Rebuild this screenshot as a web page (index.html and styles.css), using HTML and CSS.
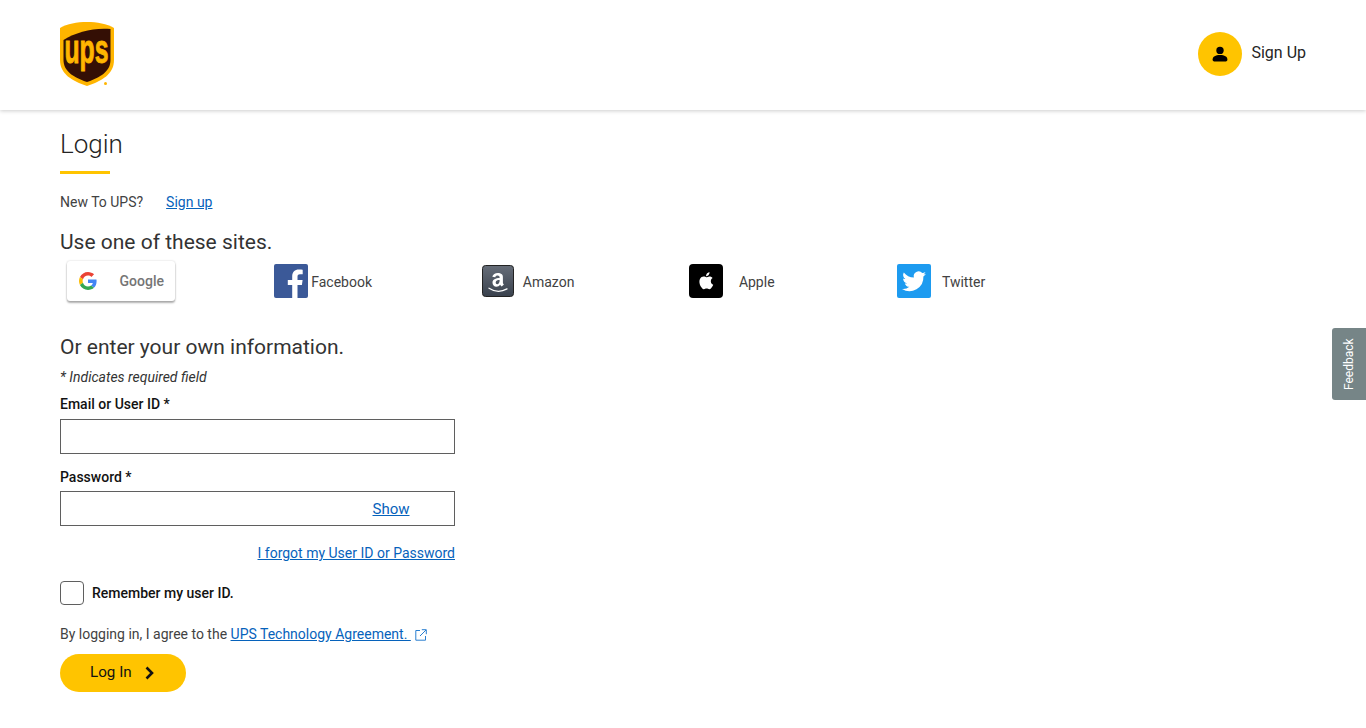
FILE: index.html
```html
<!DOCTYPE html>
<html lang="en">
<head>
<meta charset="utf-8">
<title>UPS Login</title>
<link rel="stylesheet" href="styles.css">
</head>
<body>
<header class="top">
  <svg class="logo" viewBox="0 0 54 66" width="54" height="66" aria-label="UPS">
    <path d="M27 0C17 0 7 1.700 0 6V38C0 52 12 59 27 64C42 59 54 52 54 38V6C47 1.700 37 0 27 0Z" fill="#ffb500"/>
    <path d="M50.500 7V38C50.500 49.500 40 55.500 27 60C14 55.500 3.500 49.500 3.500 38V18C16 10 34 5.500 50.500 7Z" fill="#340f05"/>
    <text class="logo-text" x="26.500" y="41" text-anchor="middle" textLength="44" lengthAdjust="spacingAndGlyphs">ups</text>
    <circle cx="45.500" cy="61.500" r="1.500" fill="#ffb500"/>
  </svg>
  <a class="signup" href="#">
    <span class="avatar">
      <svg viewBox="0 0 16 16" width="16" height="16"><circle cx="8" cy="4.400" r="3.700"/><path d="M.6 13.500C.6 10.500 3.500 8.900 8 8.900S15.400 10.500 15.400 13.500C15.400 15 14.500 15.600 13 15.600H3C1.500 15.600 .6 15 .6 13.500Z"/></svg>
    </span>
    <span class="signup-text">Sign Up</span>
  </a>
</header>

<main class="content">
  <h1 class="title">Login</h1>
  <p class="newto"><span>New To UPS?</span><a href="#">Sign up</a></p>

  <h2 class="sub sites">Use one of these sites.</h2>
  <div class="socials">
    <div class="soc">
      <button class="google" type="button">
        <svg viewBox="0 0 48 48" width="18" height="18">
          <path fill="#ea4335" d="M24 9.500c3.500 0 6.700 1.200 9.200 3.600l6.900-6.900C35.900 2.400 30.500 0 24 0 14.600 0 6.500 5.400 2.600 13.200l8 6.200C12.400 13.700 17.700 9.500 24 9.500z"/>
          <path fill="#4285f4" d="M46.900 24.500c0-1.600-.1-3.100-.4-4.500H24v9h12.900c-.6 3-2.200 5.500-4.700 7.200l7.700 6c4.500-4.200 7-10.300 7-17.700z"/>
          <path fill="#fbbc05" d="M10.500 28.600c-.5-1.400-.8-3-.8-4.600s.3-3.200.8-4.600l-8-6.200C.9 16.500 0 20.100 0 24s.9 7.500 2.600 10.800l7.900-6.200z"/>
          <path fill="#34a853" d="M24 48c6.500 0 11.900-2.100 15.900-5.800l-7.700-6c-2.200 1.400-4.900 2.300-8.200 2.300-6.300 0-11.600-4.200-13.500-9.900l-8 6.200C6.500 42.600 14.600 48 24 48z"/>
        </svg>
        <span>Google</span>
      </button>
    </div>
    <div class="soc">
      <svg class="ico" viewBox="0 0 34 34" width="34" height="34">
        <rect width="34" height="34" rx="2" fill="#3b5998"/>
        <path d="M23.500 34V21h4.400l.7-5.100h-5.100v-3.200c0-1.500.4-2.500 2.500-2.500h2.700V5.700c-.5-.1-2.100-.2-3.900-.2-3.900 0-6.600 2.400-6.600 6.800v3.600h-4.400V21h4.400v13z" fill="#fff"/>
      </svg>
      <span class="lbl gap3">Facebook</span>
    </div>
    <div class="soc">
      <svg class="ico" viewBox="0 0 32 32" width="32" height="32">
        <defs><linearGradient id="amz" x1="0" y1="0" x2="0" y2="1"><stop offset="0" stop-color="#666d78"/><stop offset="1" stop-color="#39414d"/></linearGradient></defs>
        <rect x=".5" y=".5" width="31" height="31" rx="3" fill="url(#amz)" stroke="#222"/>
        <path d="M17.600 12.500c0-1.300-.7-2.100-2-2.100-1.200 0-2.100.6-2.400 1.800l-2.900-.4c.5-2.700 2.900-3.900 5.500-3.900 1.500 0 3 .4 4 1.300 1.200 1.100 1.100 2.400 1.100 3.900v4.200c0 1.200.5 1.700 1 2.300l-2.200 1.900c-.7-.5-1.100-1.100-1.500-1.700-1 1.200-2.200 1.900-3.800 1.900-2.300 0-3.900-1.500-3.900-3.900 0-3.500 3.200-4.700 7.100-4.800v-.5zm0 2.500c-2 0-3.900.5-3.900 2.500 0 1 .6 1.700 1.500 1.700 1.500 0 2.400-1.800 2.400-3.200v-1z" fill="#fff"/>
        <path d="M7 23.200c5.500 3.600 12.500 3.800 18 .7" fill="none" stroke="#fff" stroke-width="1.300" stroke-linecap="round"/>
      </svg>
      <span class="lbl gap9">Amazon</span>
    </div>
    <div class="soc">
      <svg class="ico" viewBox="0 0 34 34" width="34" height="34">
        <rect width="34" height="34" rx="4" fill="#000"/>
        <path d="M21.800 17.200c0-2 1.700-3 1.800-3.100-1-1.400-2.500-1.600-3-1.600-1.300-.1-2.500.8-3.200.8-.7 0-1.700-.8-2.800-.7-1.400 0-2.700.8-3.500 2.100-1.400 2.500-.4 6.300 1.100 8.400.7 1.100 1.600 2.200 2.700 2.100 1.100 0 1.500-.7 2.700-.7s1.600.7 2.800.7c1.200 0 1.900-1.100 2.600-2.100.8-1.200 1.200-2.300 1.200-2.400-.1 0-2.400-.9-2.400-3.500zM19.600 11c.6-.7 1-1.700.9-2.700-.8 0-1.900.6-2.500 1.300-.5.600-1 1.600-.9 2.600 1 .1 1.900-.5 2.500-1.200z" fill="#fff"/>
      </svg>
      <span class="lbl gap16">Apple</span>
    </div>
    <div class="soc">
      <svg class="ico" viewBox="0 0 34 34" width="34" height="34">
        <rect width="34" height="34" rx="2" fill="#1d9bf0"/>
        <path d="M29 9.800c-.9.400-1.800.7-2.800.8 1-.6 1.800-1.600 2.200-2.700-.9.600-2 1-3.100 1.200a4.900 4.900 0 0 0-8.400 4.500c-4.100-.2-7.700-2.200-10.100-5.200a4.900 4.900 0 0 0 1.500 6.600c-.8 0-1.600-.2-2.200-.6v.1c0 2.400 1.700 4.400 3.900 4.800-.7.200-1.500.2-2.200.1.600 2 2.400 3.400 4.600 3.400A9.900 9.900 0 0 1 5 24.900a13.900 13.900 0 0 0 21.400-12.400c.9-.7 1.900-1.600 2.600-2.700z" fill="#fff"/>
      </svg>
      <span class="lbl gap11">Twitter</span>
    </div>
  </div>

  <h2 class="sub own">Or enter your own information.</h2>
  <p class="req">* Indicates required field</p>

  <form class="form">
    <label class="flabel" for="uid">Email or User ID *</label>
    <input class="field" id="uid" type="text">
    <label class="flabel pw" for="pwd">Password *</label>
    <div class="pwwrap">
      <input class="field" id="pwd" type="password">
      <a class="show" href="#">Show</a>
    </div>
    <a class="forgot" href="#">I forgot my User ID or Password</a>
    <label class="remember"><span class="box"></span><span>Remember my user ID.</span></label>
    <p class="agree">By logging in, I agree to the <a href="#">UPS Technology Agreement.&nbsp;</a>
      <svg class="ext" viewBox="0 0 12 12" width="12" height="12"><path d="M5 1.500H.8v9.700h9.700V7M6.800.7h4.500v4.500M11 1 5 7" fill="none" stroke="#2a7fd0" stroke-width="1"/></svg>
    </p>
    <button class="login" type="button"><span class="login-text">Log In</span>
      <svg viewBox="0 0 10 14" width="10" height="14"><path d="M1.500 1.500 7 7 1.500 12.500" fill="none" stroke="#121212" stroke-width="2.600"/></svg>
    </button>
  </form>
</main>

<a class="feedback" href="#">Feedback</a>
</body>
</html>
```
FILE: styles.css
```css
* { box-sizing: border-box; }
html, body { margin: 0; padding: 0; background: #fff; }
body {
  font-family: Roboto, "Liberation Sans", sans-serif;
  font-size: 14px;
  color: #333;
  height: 728px;
  overflow: hidden;
}
a { color: #0662bb; }

.top {
  height: 110px;
  display: flex;
  align-items: flex-start;
  justify-content: space-between;
  padding: 22px 60px 0;
  box-shadow: 0 1px 4px rgba(0,0,0,.2);
}
.logo { display: block; overflow: visible; }
.logo-text {
  font-family: "Liberation Sans", sans-serif;
  font-size: 40px;
  font-weight: 700;
  fill: #ffb500;
  stroke: #ffb500;
  stroke-width: .9px;
}
.signup {
  display: flex;
  align-items: center;
  gap: 9px;
  margin-top: 10px;
  font-size: 16px;
  color: #242424;
  text-decoration: none;
}
.signup-text { padding-bottom: 4px; }
.avatar {
  width: 44px;
  height: 44px;
  border-radius: 50%;
  background: #ffc400;
  display: flex;
  align-items: center;
  justify-content: center;
}

.content { padding: 0 60px; }
.title {
  margin: 18px 0 0;
  width: 50px;
  font-size: 26px;
  line-height: 32px;
  font-weight: 300;
  color: #242424;
  white-space: nowrap;
  padding-bottom: 11px;
  border-bottom: 3px solid #ffc400;
}
.newto { margin: 20px 0 0; line-height: 16px; display: flex; gap: 23px; color: #424242; }
.sub { margin: 0; font-size: 21px; line-height: 24px; font-weight: 400; color: #333; }
.sites { margin-top: 20px; }
.socials { display: flex; padding-left: 6.600px; margin-top: 7px; height: 40px; }
.soc { width: 207.600px; display: flex; align-items: center; }
.soc .ico { flex: none; }
.lbl { color: #424242; padding-top: 2px; }
.gap3 { margin-left: 3px; }
.gap9 { margin-left: 9px; }
.gap11 { margin-left: 11px; }
.gap16 { margin-left: 15.500px; }
.google {
  width: 108px;
  height: 40px;
  margin-left: .4px;
  padding: 0 11px 0 12px;
  display: flex;
  align-items: center;
  justify-content: space-between;
  background: #fff;
  border: 0;
  border-radius: 3px;
  box-shadow: 0 0 2px rgba(0,0,0,.2), 0 2px 2px rgba(0,0,0,.3);
  font: 500 14px Roboto, sans-serif;
  color: #757575;
}
.own { margin-top: 34px; }
.req { margin: 10px 0 0; font-style: italic; line-height: 16px; color: #333; }

.form { width: 395px; display: flex; flex-direction: column; align-items: flex-start; }
.flabel { margin-top: 11px; line-height: 16px; font-weight: 500; color: #121212; }
.flabel.pw { margin-top: 15px; }
.field {
  display: block;
  width: 395px;
  height: 35px;
  margin-top: 7px;
  border: 1px solid #5f5f5f;
  border-radius: 0;
  background: #fff;
  outline: 0;
}
.pwwrap { position: relative; width: 395px; }
#pwd { height: 35px; margin-top: 6px; }
.show { position: absolute; left: 312.500px; top: 15px; font-size: 15px; line-height: 18px; }
.forgot { align-self: flex-end; margin-top: 19px; line-height: 16px; }
.remember { display: flex; align-items: center; gap: 8px; margin-top: 20px; font-weight: 500; color: #121212; }
.box { width: 24px; height: 24px; border: 1px solid #5f5f5f; border-radius: 4px; background: #fff; }
.agree { margin: 21px 0 0; line-height: 16px; color: #424242; white-space: nowrap; }
.ext { margin-left: 1px; vertical-align: -2px; }
.login {
  margin-top: 12px;
  width: 126px;
  height: 38px;
  border: 0;
  border-radius: 19px;
  background: #ffc400;
  display: flex;
  align-items: center;
  gap: 13px;
  padding: 0 0 0 30px;
  font: 400 15.200px Roboto, sans-serif;
  color: #121212;
}
.login-text { padding-bottom: 2px; }

.feedback {
  position: absolute;
  right: 0;
  top: 328px;
  width: 34px;
  height: 72px;
  background: #768587;
  color: #fff;
  font-size: 12px;
  text-decoration: none;
  display: flex;
  align-items: center;
  justify-content: center;
  writing-mode: vertical-rl;
  transform: rotate(180deg);
  border-radius: 0 3px 3px 0;
}
```
